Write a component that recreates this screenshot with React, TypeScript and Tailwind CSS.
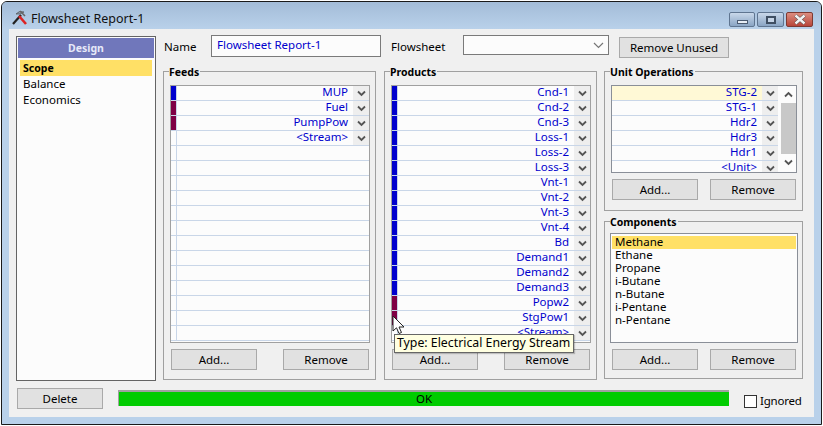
import React from "react";

const Chev = ({ up = false }: { up?: boolean }) => (
  <svg width="9" height="7" viewBox="0 0 9 7" className="block">
    <path d={up ? "M1 5.5 L4.5 2 L8 5.5" : "M1 1.5 L4.5 5 L8 1.5"} fill="none" stroke="#555" strokeWidth="1.8" />
  </svg>
);

const Btn = ({ label, w = "w-[86px]" }: { label: string; w?: string }) => (
  <div className={`${w} h-[21px] shrink-0 border border-[#a9a9a9] bg-[#e1e1e1] flex items-center justify-center text-black`}>{label}</div>
);

type Row = { name?: string; color?: string; hi?: boolean };

const GridRows = ({ rows, count, swatch = true }: { rows: Row[]; count: number; swatch?: boolean }) => {
  const all: Row[] = [...rows, ...Array(Math.max(0, count - rows.length)).fill({})];
  return (
    <>
      {all.map((r, i) => (
        <div key={i} className="h-[15px] shrink-0 flex border-b border-[#c9d6e8]">
          {swatch && (
            <div className="w-[6px] shrink-0 border-r border-[#c9d6e8]">
              <div className="w-[5px] h-full" style={{ background: r.color }} />
            </div>
          )}
          <div className={`flex-1 min-w-0 text-right pr-[5px] leading-[12px] text-[#0000cd] ${r.hi ? "bg-[#fff9d6]" : ""}`}>{r.name}</div>
          {r.name ? (
            <div className="w-[16px] shrink-0 bg-[#eeeeee] flex items-center justify-center"><Chev /></div>
          ) : (
            <div className="w-[16px] shrink-0" />
          )}
        </div>
      ))}
    </>
  );
};

const Group = ({ title, className, children }: { title: string; className: string; children: React.ReactNode }) => (
  <div className={`relative border border-[#a0a0a0] ${className}`}>
    <div className="absolute left-[5px] -top-[7px] bg-[#f0f0f0] pr-[1px] font-bold text-[10.5px] leading-[14px] text-black">{title}</div>
    {children}
  </div>
);

const Buttons = () => (
  <div className="flex justify-between mt-[6px]">
    <Btn label="Add..." />
    <Btn label="Remove" />
  </div>
);

const B = "#0000cd";
const M = "#7f0044";
const feeds: Row[] = [
  { name: "MUP", color: B },
  { name: "Fuel", color: M },
  { name: "PumpPow", color: M },
  { name: "<Stream>" },
];
const products: Row[] = [
  ...["Cnd-1", "Cnd-2", "Cnd-3", "Loss-1", "Loss-2", "Loss-3", "Vnt-1", "Vnt-2", "Vnt-3", "Vnt-4", "Bd", "Demand1", "Demand2", "Demand3"].map((name) => ({ name, color: B })),
  { name: "Popw2", color: M },
  { name: "StgPow1", color: M },
  { name: "<Stream>" },
];
const units: Row[] = [
  { name: "STG-2", hi: true },
  { name: "STG-1" },
  { name: "Hdr2" },
  { name: "Hdr3" },
  { name: "Hdr1" },
  { name: "<Unit>" },
];
const comps = ["Methane", "Ethane", "Propane", "i-Butane", "n-Butane", "i-Pentane", "n-Pentane"];

export default function App() {
  return (
    <div className="w-[823px] h-[426px] bg-white pl-[1px] pt-[1px] text-[11.5px] text-black overflow-hidden" style={{ fontFamily: '"Noto Sans", sans-serif' }}>
      <div className="relative w-[821px] h-[424px] border border-[#1a1a1a] rounded-t-[6px] bg-[#b9d1ea] flex flex-col overflow-hidden">
        {/* Title bar */}
        <div className="h-[27px] shrink-0 flex items-start bg-gradient-to-b from-[#a3bcd8] to-[#b9d1ea]">
          <svg width="17" height="17" viewBox="0 0 17 17" className="ml-[9px] mt-[7px] shrink-0">
            <path d="M2 15 L10 6" stroke="#222" strokeWidth="2.2" />
            <path d="M15 15 L8 7" stroke="#d22" strokeWidth="2.6" />
            <path d="M5 5 Q8 1 13 3 L9 5 Z" fill="#8a97a8" stroke="#444" strokeWidth="0.6" />
            <path d="M9 2 L14 7" stroke="#666" strokeWidth="1.6" />
          </svg>
          <span className="ml-[3px] text-[12.5px] leading-[16px] text-[#111] mt-[9px]">Flowsheet Report-1</span>
          <div className="ml-auto mr-[8px] mt-[10px] flex gap-[2px]">
            <div className="w-[26px] h-[15px] rounded-[2px] border border-[#5f7590] bg-gradient-to-b from-[#c9d8ea] to-[#8aa5c4] flex items-end justify-center pb-[2px]">
              <div className="w-[11px] h-[4px] bg-[#e8eef5] border border-[#4a5a70]" />
            </div>
            <div className="w-[27px] h-[15px] rounded-[2px] border border-[#5f7590] bg-gradient-to-b from-[#c9d8ea] to-[#8aa5c4] flex items-center justify-center">
              <div className="w-[10px] h-[8px] bg-[#c5d4e6] border-2 border-[#3f4f63]" />
            </div>
            <div className="w-[27px] h-[15px] rounded-[2px] border border-[#7d3a32] bg-gradient-to-b from-[#dc8d80] to-[#b8453a] flex items-center justify-center">
              <svg width="14" height="11" viewBox="0 0 14 11"><path d="M2.5 1.5 L11.5 9.5 M11.5 1.5 L2.5 9.5" stroke="#4b4b4b" strokeWidth="3.6" /><path d="M2.5 1.5 L11.5 9.5 M11.5 1.5 L2.5 9.5" stroke="#f3f3f3" strokeWidth="2.4" /></svg>
            </div>
          </div>
        </div>

        {/* Client area */}
        <div className="mx-[7px] w-[805px] h-[388px] shrink-0 bg-[#f0f0f0] flex flex-col">
          <div className="flex pl-[7px] pt-[7px]">
            {/* Sidebar */}
            <div className="w-[140px] h-[345px] shrink-0 border border-[#646464] bg-[#fcfcfc] p-[1px]">
              <div className="h-[20px] pt-[1px] bg-[#7077bb] text-[#e6e9f8] font-bold text-[10.5px] flex items-center justify-center">Design</div>
              <div className="mx-[2px] mt-[2px] h-[16px] bg-[#ffe066] font-bold text-[10.5px] pl-[3px] leading-[16px]">Scope</div>
              <div className="mx-[2px] h-[16px] pl-[3px] leading-[16px]">Balance</div>
              <div className="mx-[2px] h-[16px] pl-[3px] leading-[16px]">Economics</div>
            </div>

            {/* Right side */}
            <div className="ml-[7px] flex-1 min-w-0 -mt-[1px]">
              <div className="flex items-start h-[36px]">
                <div className="w-[48px] pl-[1px] pt-[3px]">Name</div>
                <div className="w-[170px] h-[22px] border border-[#7a7a7a] bg-[#fcfcfc] text-[#0000cd] pl-[5px] leading-[18px]">Flowsheet Report-1</div>
                <div className="w-[82px] pl-[10px] pt-[3px]">Flowsheet</div>
                <div className="w-[146px] h-[20px] border border-[#7a7a7a] bg-[#fcfcfc] flex items-center justify-end pr-[4px]">
                  <svg width="11" height="7" viewBox="0 0 11 7"><path d="M1 1 L5.5 5.5 L10 1" fill="none" stroke="#777" strokeWidth="1.2" /></svg>
                </div>
                <div className="ml-[10px] mt-[2px]"><Btn label="Remove Unused" w="w-[110px]" /></div>
              </div>

              <div className="flex">
                <Group title="Feeds" className="w-[213px] h-[309px] pl-[6px] pt-[13px] shrink-0">
                  <div className="w-[200px] h-[258px] border border-[#a0a0a0] bg-[#fcfcfc] overflow-hidden flex flex-col">
                    <GridRows rows={feeds} count={17} />
                  </div>
                  <div className="w-[198px] ml-[1px]"><Buttons /></div>
                </Group>
                <Group title="Products" className="ml-[8px] w-[213px] h-[309px] pl-[6px] pt-[13px] shrink-0">
                  <div className="w-[200px] h-[258px] border border-[#a0a0a0] bg-[#fcfcfc] overflow-hidden flex flex-col">
                    <GridRows rows={products} count={17} />
                  </div>
                  <div className="w-[198px] ml-[1px]"><Buttons /></div>
                </Group>
                <div className="ml-[7px] w-[199px] shrink-0">
                  <Group title="Unit Operations" className="h-[140px] pl-[6px] pt-[13px]">
                    <div className="w-[186px] h-[88px] border border-[#8a8f98] bg-[#fcfcfc] flex overflow-hidden">
                      <div className="flex-1 min-w-0 flex flex-col overflow-hidden">
                        <GridRows rows={units} count={6} swatch={false} />
                      </div>
                      <div className="w-[18px] shrink-0 flex flex-col items-end">
                        <div className="w-[15px] h-[17px] flex items-center justify-center"><Chev up /></div>
                        <div className="w-[15px] h-[51px] bg-[#c8c8c8]" />
                        <div className="w-[15px] h-[17px] flex items-center justify-center"><Chev /></div>
                      </div>
                    </div>
                    <div className="w-[184px] ml-[1px]"><Buttons /></div>
                  </Group>
                  <Group title="Components" className="mt-[10px] h-[158px] pl-[5px] pt-[11px]">
                    <div className="w-[188px] h-[110px] border border-[#8a8f98] bg-[#fcfcfc] p-[1px]">
                      <div className="h-[13px] bg-[#ffe066] pl-[3px] leading-[11px] mt-[1px]">Methane</div>
                      {comps.slice(1).map((c) => (
                        <div key={c} className="h-[13px] pl-[3px] leading-[11px]">{c}</div>
                      ))}
                    </div>
                    <div className="w-[184px] ml-[2px]"><Buttons /></div>
                  </Group>
                </div>
              </div>
            </div>
          </div>

          {/* Bottom row */}
          <div className="flex items-start mt-[7px] pl-[8px]">
            <Btn label="Delete" />
            <div className="ml-[15px] mt-[2px] w-[611px] h-[16px] pb-[2px] border-t-2 border-l border-[#a0a0a0] bg-[#00cc00] flex items-center justify-center leading-[13px]">OK</div>
            <div className="ml-[15px] mt-[4px] flex items-center">
              <div className="w-[13px] h-[13px] border border-[#333] bg-white" />
              <span className="ml-[3px] pb-[2px] tracking-[-0.2px]">Ignored</span>
            </div>
          </div>
        </div>

        {/* Tooltip and pointer */}
        <div className="absolute left-[392px] top-[332px] w-[180px] h-[19px] border border-[#666] bg-[#ffffe1] flex items-center pl-[2px] text-[12.3px] whitespace-nowrap shadow-[1px_1px_1px_rgba(0,0,0,0.2)]">Type: Electrical Energy Stream</div>
        <svg width="14" height="21" viewBox="0 0 14 21" className="absolute left-[390px] top-[313px]">
          <path d="M1 1 L1 16 L4.5 12.8 L7 18.5 L9.5 17.5 L7 12 L12 12 Z" fill="#fff" stroke="#222" strokeWidth="1" />
        </svg>
      </div>
    </div>
  );
}
